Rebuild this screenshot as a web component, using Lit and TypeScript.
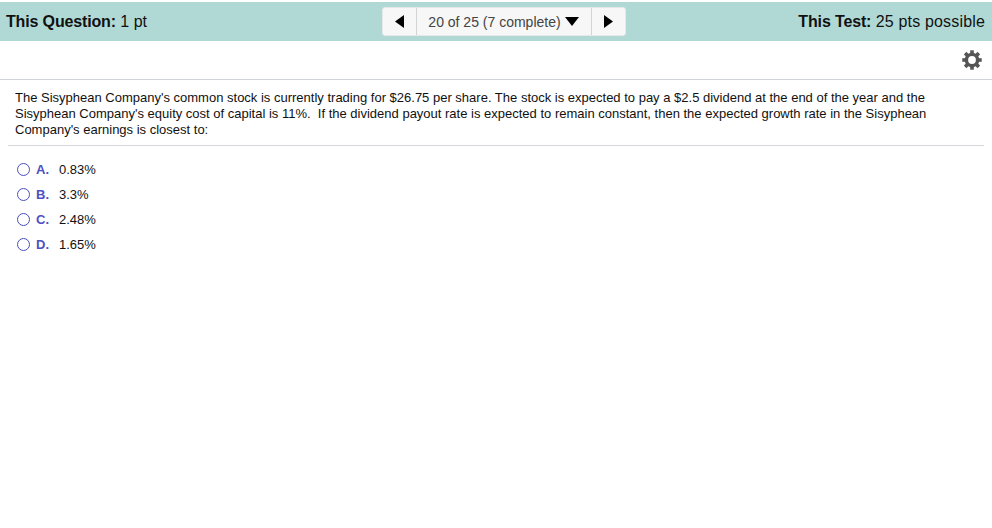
import { LitElement, html, css, svg } from "lit";
import { customElement } from "lit/decorators.js";

@customElement("app-root")
export class AppRoot extends LitElement {
  static styles = css`
    :host { display: block; width: 992px; height: 528px; background: #fff; overflow: hidden; font-family: "Liberation Sans", Arial, sans-serif; color: #111; }
    .bar { margin-top: 2px; height: 39px; background: #b0d9d5; display: grid; grid-template-columns: 1fr auto 1fr; align-items: center; padding: 0 7px 0 6px; font-size: 16px; }
    .bar b { font-weight: 700; letter-spacing: -0.15px; }
    .right { text-align: right; }
    .wide { letter-spacing: 0.17px; }
    .nav { display: flex; height: 29px; margin-left: 16px; background: #f7f7f7; border-radius: 3px; box-sizing: border-box; border: 1px solid #e4e8e8; color: #444; font-size: 14px; }
    .btn { width: 33px; display: flex; align-items: center; justify-content: center; }
    .btn.l { border-right: 1px solid #d4d4d4; }
    .btn.r { border-left: 1px solid #d4d4d4; }
    .mid { width: 174px; display: flex; align-items: center; justify-content: center; gap: 4px; }
    .tools { height: 38px; display: flex; align-items: center; justify-content: flex-end; padding-right: 10px; border-bottom: 1px solid #d0d3dc; }
    .gear { display: block; }
    .q { margin: 0 8px; padding: 10px 7px 7px; font-size: 13px; line-height: 16px; border-bottom: 1px solid #d4d8dc; color: #111; white-space: pre-wrap; }
    .opts { display: flex; flex-direction: column; gap: 5px; padding: 13px 0 0 17px; font-size: 13px; }
    .opt { display: flex; align-items: center; height: 20px; }
    .radio { width: 11px; height: 11px; border: 1.3px solid #4a50b8; border-radius: 50%; margin-right: 6px; flex: none; }
    .letter { width: 23px; color: #4f4fc4; font-weight: 700; }
  `;
  render() {
    const opts = [["A.", "0.83%"], ["B.", "3.3%"], ["C.", "2.48%"], ["D.", "1.65%"]];
    const angles = [0, 45, 90, 135, 180, 225, 270, 315];
    return html`
      <div class="bar">
        <div><b>This Question:</b> 1 pt</div>
        <div class="nav">
          <div class="btn l"><svg width="9" height="13" viewBox="0 0 9 13"><path d="M9 0V13L0 6.500Z" fill="#000"/></svg></div>
          <div class="mid"><span>20 of 25 (7 complete)</span><svg width="14" height="9" viewBox="0 0 14 9"><path d="M0 0H14L7 9Z" fill="#000"/></svg></div>
          <div class="btn r"><svg width="9" height="13" viewBox="0 0 9 13"><path d="M0 0V13L9 6.500Z" fill="#000"/></svg></div>
        </div>
        <div class="right"><b>This Test:</b> <span class="wide">25 pts possible</span></div>
      </div>
      <div class="tools">
        <svg class="gear" width="20" height="20" viewBox="0 0 20 20">
          <circle cx="10" cy="10" r="5.600" fill="none" stroke="#555" stroke-width="3.400"/>
          ${angles.map((a) => svg`<rect x="8.200" y="0.300" width="3.600" height="4" fill="#555" transform="rotate(${a} 10 10)"/>`)}
        </svg>
      </div>
      <div class="q">The Sisyphean Company's common stock is currently trading for $26.75 per share. The stock is expected to pay a $2.5 dividend at the end of the year and the
Sisyphean Company's equity cost of capital is 11%.  If the dividend payout rate is expected to remain constant, then the expected growth rate in the Sisyphean
Company's earnings is closest to:</div>
      <div class="opts">
        ${opts.map(([l, v]) => html`<div class="opt"><span class="radio"></span><span class="letter">${l}</span><span>${v}</span></div>`)}
      </div>
    `;
  }
}
